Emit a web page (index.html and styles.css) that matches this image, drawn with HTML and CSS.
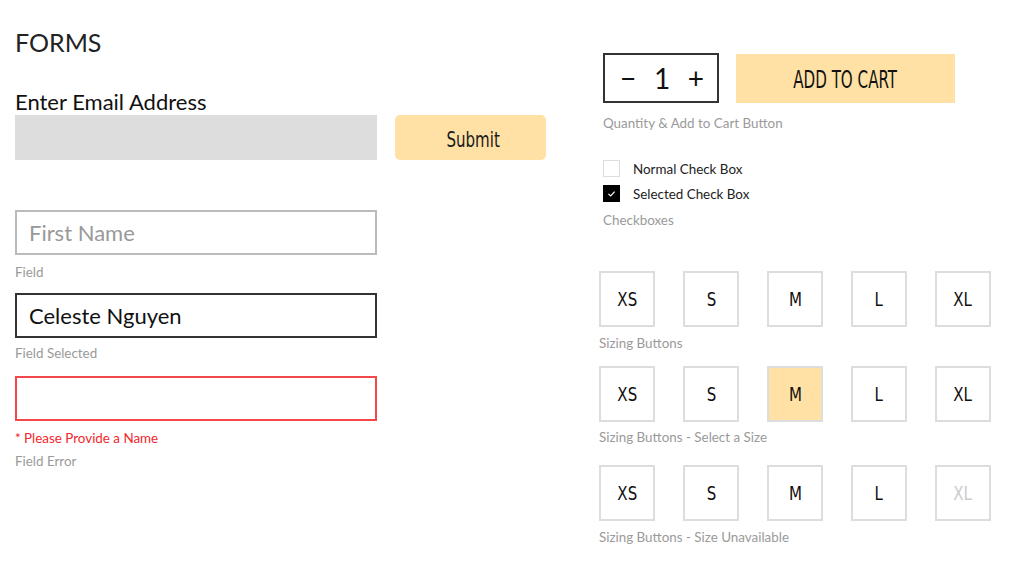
FILE: index.html
```html
<!DOCTYPE html>
<html lang="en">
<head>
<meta charset="utf-8">
<title>Forms</title>
<link rel="stylesheet" href="styles.css">
</head>
<body>
<div class="page">
  <section class="left">
    <h1 class="title">FORMS</h1>
    <div class="email-label">Enter Email Address</div>
    <div class="email-row">
      <div class="email-input"></div>
      <button class="submit"><span class="narrow">Submit</span></button>
    </div>

    <div class="field field-normal"><span class="placeholder">First Name</span></div>
    <div class="caption cap-1">Field</div>

    <div class="field field-selected"><span class="value">Celeste Nguyen</span></div>
    <div class="caption cap-2">Field Selected</div>

    <div class="field field-error"></div>
    <div class="error-msg">* Please Provide a Name</div>
    <div class="caption cap-3">Field Error</div>
  </section>

  <section class="right">
    <div class="cart-row">
      <div class="qty">
        <span class="qty-minus">&minus;</span>
        <span class="qty-num">1</span>
        <span class="qty-plus">+</span>
      </div>
      <button class="add-cart"><span class="narrow">ADD TO CART</span></button>
    </div>
    <div class="caption cap-cart">Quantity &amp; Add to Cart Button</div>

    <div class="checks">
      <div class="check-row"><span class="box"></span><span class="check-label">Normal Check Box</span></div>
      <div class="check-row"><span class="box box-on"><svg viewBox="0 0 17 17" width="17" height="17"><path d="M5.4 8.9 L7.7 11 L11.6 6.6" fill="none" stroke="#fff" stroke-width="1.2"/></svg></span><span class="check-label">Selected Check Box</span></div>
    </div>
    <div class="caption cap-checks">Checkboxes</div>

    <div class="sizes sizes-1">
      <span class="size"><span class="narrow">XS</span></span><span class="size"><span class="narrow">S</span></span><span class="size"><span class="narrow">M</span></span><span class="size"><span class="narrow">L</span></span><span class="size"><span class="narrow">XL</span></span>
    </div>
    <div class="caption cap-size">Sizing Buttons</div>

    <div class="sizes sizes-2">
      <span class="size"><span class="narrow">XS</span></span><span class="size"><span class="narrow">S</span></span><span class="size size-on"><span class="narrow">M</span></span><span class="size"><span class="narrow">L</span></span><span class="size"><span class="narrow">XL</span></span>
    </div>
    <div class="caption cap-size2">Sizing Buttons - Select a Size</div>

    <div class="sizes sizes-3">
      <span class="size"><span class="narrow">XS</span></span><span class="size"><span class="narrow">S</span></span><span class="size"><span class="narrow">M</span></span><span class="size"><span class="narrow">L</span></span><span class="size size-off"><span class="narrow">XL</span></span>
    </div>
    <div class="caption cap-size">Sizing Buttons - Size Unavailable</div>
  </section>
</div>
</body>
</html>
```
FILE: styles.css
```css
* { box-sizing: border-box; }
html, body { margin: 0; padding: 0; background: #fff; }
body {
  font-family: Lato, "Open Sans", sans-serif;
  color: #111;
  width: 1024px;
  height: 584px;
  overflow: hidden;
}
.page {
  display: flex;
  padding-top: 27px;
}
.left {
  width: 547px;
  margin-left: 15px;
}
.right {
  margin-left: 37px;
  padding-top: 26px;
}
.narrow {
  display: inline-block;
  font-family: "DejaVu Sans Condensed", "DejaVu Sans", sans-serif;
  font-weight: 400;
}
.title {
  margin: 0;
  font-size: 25px;
  line-height: 30px;
  font-weight: 400;
  color: #222;
}
.email-label {
  margin-top: 32px;
  font-size: 22px;
  line-height: 26px;
  color: #111;
}
.email-row {
  display: flex;
  gap: 18px;
  height: 45px;
}
.email-input {
  width: 362px;
  height: 45px;
  background: #dddddd;
}
.submit {
  width: 151px;
  height: 45px;
  border: 0;
  border-radius: 5px;
  background: #ffe1a5;
  color: #1a1a1a;
  padding: 0;
  font-size: 22px;
}
.submit .narrow {
  font-size: 22px;
  transform: scaleX(0.76);
  margin-top: 4px;
  margin-left: 5px;
}
.field {
  width: 362px;
  height: 45px;
  border: 2px solid #bbbbbb;
  display: flex;
  align-items: center;
  padding-left: 12px;
  font-size: 22px;
}
.field-normal { margin-top: 50px; }
.placeholder { color: #999; }
.field-selected { border-color: #333; margin-top: 13px; }
.value { color: #111; }
.field-error { border-color: #f4474a; margin-top: 15px; }
.caption {
  font-size: 13.4px;
  line-height: 16px;
  color: #9a9a9a;
}
.cap-1 { margin-top: 9px; }
.cap-2 { margin-top: 7px; }
.error-msg {
  margin-top: 9px;
  font-size: 13.4px;
  line-height: 16px;
  color: #f2262c;
}
.cap-3 { margin-top: 7px; }

/* right column */
.cart-row {
  display: flex;
  gap: 17px;
  margin-left: 4px;
  height: 50px;
}
.qty {
  width: 116px;
  height: 50px;
  border: 2px solid #333;
  display: flex;
  align-items: center;
  justify-content: space-between;
  padding: 0 13px 0 15px;
  font-size: 28px;
  font-weight: 400;
  color: #111;
}
.add-cart {
  width: 219px;
  height: 49px;
  margin-top: 1px;
  border: 0;
  background: #ffe1a5;
  color: #111;
  padding: 0;
  font-size: 24px;
}
.add-cart .narrow {
  font-size: 24px;
  transform: scaleX(0.7);
  margin-top: 3px;
}
.cap-cart { margin: 12px 0 0 4px; }
.checks {
  margin: 29px 0 0 4px;
  display: flex;
  flex-direction: column;
  gap: 8px;
}
.check-row {
  display: flex;
  align-items: center;
  gap: 13px;
  height: 17px;
}
.box {
  width: 17px;
  height: 17px;
  border: 1.5px solid #dddddd;
  background: #fff;
  display: block;
}
.box-on {
  background: #000;
  border-color: #000;
  position: relative;
}
.box-on svg { position: absolute; left: -1.5px; top: -1.5px; }
.check-label {
  font-size: 13.4px;
  color: #222;
}
.cap-checks { margin: 10px 0 0 4px; }
.sizes {
  display: flex;
  gap: 28px;
}
.sizes-1 { margin-top: 43px; }
.sizes-2 { margin-top: 15px; }
.sizes-3 { margin-top: 20px; }
.size {
  width: 56px;
  height: 56px;
  border: 2px solid #dddddd;
  display: flex;
  align-items: center;
  justify-content: center;
  color: #111;
}
.size .narrow {
  font-size: 19px;
  transform: scaleX(0.88);
}
.size-on { background: #ffe1a5; }
.size-off { color: #cccccc; }
.cap-size { margin-top: 8px; }
.cap-size2 { margin-top: 7px; }
```
